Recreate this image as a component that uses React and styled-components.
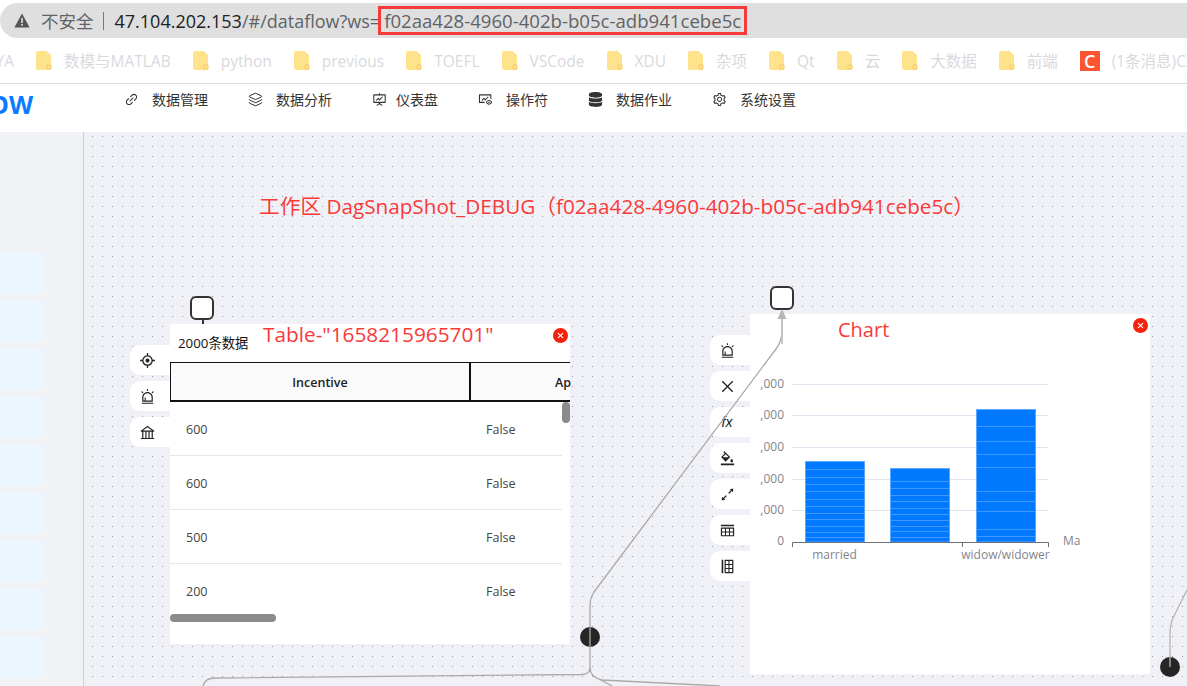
import React from 'react';
import styled, { createGlobalStyle } from 'styled-components';
import {
  AiOutlineLink, AiOutlineFundProjectionScreen, AiOutlineFundView, AiOutlineSetting,
  AiOutlineAim, AiOutlineAlert, AiOutlineBank, AiOutlineClose, AiOutlineBgColors,
  AiOutlineArrowsAlt, AiOutlineInsertRowAbove, AiOutlineInsertRowLeft, AiFillCloseCircle,
} from 'react-icons/ai';
import { FaDatabase } from 'react-icons/fa';
import { Layers } from 'lucide-react';

const FONT = `"Open Sans", "Noto Sans CJK SC", sans-serif`;
const RED = '#f93a3a';

const Global = createGlobalStyle`
  html, body { margin: 0; padding: 0; overflow: hidden; background: #fff; }
  * { box-sizing: border-box; }
`;

const Page = styled.div`
  width: 1187px;
  height: 686px;
  display: flex;
  flex-direction: column;
  overflow: hidden;
  font-family: ${FONT};
`;

/* browser chrome */
const AddressBar = styled.div`
  flex: none;
  height: 35px;
  margin-top: 3px;
  padding-left: 14px;
  display: flex;
  align-items: center;
  background: #dfdfdf;
  border-radius: 18px 0 0 18px;
  font-size: 18px;
  white-space: nowrap;
`;

const Warn = styled.svg`
  width: 16px;
  height: 15px;
  margin-right: 11px;
`;

const Insecure = styled.span`
  color: #5f6368;
  font-size: 17.5px;
`;

const Pipe = styled.span`
  width: 1px;
  height: 18px;
  margin: 0 11px 0 9px;
  background: #777;
`;

const Host = styled.span`
  color: #202124;
`;

const Rest = styled.span`
  color: #5f6368;
`;

const Highlight = styled.span`
  height: 29px;
  margin-left: -2px;
  padding: 0 3px;
  display: flex;
  align-items: center;
  border: 3px solid ${RED};
  color: #5f6368;
  font-size: 18.6px;
`;

const Bookmarks = styled.div`
  flex: none;
  height: 46px;
  margin-left: -20px;
  display: flex;
  align-items: center;
  gap: 22px;
  border-bottom: 1px solid #dcdcdc;
  white-space: nowrap;
`;

const Bookmark = styled.div`
  flex: none;
  display: flex;
  align-items: center;
  gap: 12px;
  color: #d9d9dd;
  font-size: 15.5px;
`;

const Faded = styled.span`
  flex: none;
  width: 34px;
  text-align: right;
  color: #d9d9dd;
  font-size: 15.5px;
`;

const CsdnMark = styled.span`
  width: 20px;
  height: 20px;
  display: flex;
  align-items: center;
  justify-content: center;
  background: #fc5531;
  color: #fff;
  font-size: 18px;
  font-weight: 600;
`;

/* app header */
const NavBar = styled.div`
  flex: none;
  height: 48px;
  padding-top: 5px;
  display: flex;
  align-items: flex-start;
  background: #fff;
`;

const Logo = styled.div`
  width: 135px;
  margin-left: -11px;
  margin-top: 2px;
  color: #0a7bff;
  font-size: 25px;
  font-weight: 700;
  line-height: 26px;
`;

const NavList = styled.div`
  display: flex;
  gap: 40px;
`;

const NavItem = styled.div`
  display: flex;
  align-items: center;
  gap: ${p => (p.$tight ? 9 : 13)}px;
  height: 20px;
  color: #333;
  font-size: 14px;
  svg { flex: none; width: 15px; height: 15px; color: #333; }
`;

/* workspace */
const Workspace = styled.div`
  flex: 1;
  display: flex;
  min-height: 0;
`;

const Sidebar = styled.div`
  flex: none;
  width: 84px;
  padding-top: 120px;
  display: flex;
  flex-direction: column;
  gap: 6px;
  background: #f0f2f5;
  border-right: 1px solid #cfcfd3;
`;

const SideItem = styled.div`
  flex: none;
  width: 44px;
  height: 42px;
  background: #ecf6ff;
  border-radius: 0 6px 6px 0;
`;

const Canvas = styled.div`
  position: relative;
  flex: 1;
  overflow: hidden;
  background-color: #f0f1f6;
  background-image: radial-gradient(circle at 8.5px 4.5px, #9d9da2 0.6px, transparent 1px);
  background-size: 10px 10px;
`;

const Title = styled.div`
  position: absolute;
  left: 175px;
  top: 58px;
  color: ${RED};
  font-size: 20.7px;
  white-space: nowrap;
`;

const Node = styled.div`
  position: absolute;
  left: ${p => p.$x}px;
  top: ${p => p.$y}px;
  display: flex;
  align-items: flex-start;
`;

const Tools = styled.div`
  width: 40px;
  margin-top: 21px;
  display: flex;
  flex-direction: column;
  gap: 6px;
`;

const Tool = styled.div`
  height: 30px;
  padding-right: 6px;
  display: flex;
  align-items: center;
  justify-content: center;
  background: #fff;
  border-radius: 10px 0 0 10px;
  color: #222;
  font-size: 14px;
  svg { width: 17px; height: 17px; }
`;

const Fx = styled.i`
  font-family: "Liberation Sans", sans-serif;
  font-size: 14px;
`;

const Card = styled.div`
  position: relative;
  width: 400px;
  height: ${p => p.$h}px;
  background: #fff;
`;

const Handle = styled.div`
  position: absolute;
  top: -28px;
  left: ${p => p.$x}px;
  width: 24px;
  height: 24px;
  background: #fff;
  border: 2px solid #333;
  border-radius: 6px;
`;

const Stem = styled.div`
  position: absolute;
  top: -4px;
  left: 32px;
  width: 2px;
  height: 4px;
  background: #333;
`;

const Close = styled(AiFillCloseCircle)`
  position: absolute;
  top: ${p => p.$y}px;
  right: 1px;
  width: 17px;
  height: 17px;
  color: #f5210f;
`;

const CardLabel = styled.div`
  position: absolute;
  top: ${p => p.$y}px;
  left: ${p => p.$x}px;
  color: ${RED};
  font-size: ${p => p.$size}px;
  white-space: nowrap;
`;

const Count = styled.div`
  height: 38px;
  padding: 9px 0 0 8px;
  color: #111;
  font-size: 13.3px;
`;

const TableHead = styled.div`
  height: 40px;
  display: grid;
  grid-template-columns: 300px 100px;
  background: #fafafa;
  border-top: 1px solid #111;
  border-bottom: 2px solid #111;
  border-left: 1px solid #111;
  color: #222;
  font-size: 12.5px;
  font-weight: 600;
`;

const HeadCell = styled.div`
  display: flex;
  align-items: center;
  justify-content: ${p => (p.$clip ? 'flex-start' : 'center')};
  padding-left: ${p => (p.$clip ? 84 : 0)}px;
  padding-top: 1px;
  border-right: ${p => (p.$clip ? 0 : 2)}px solid #111;
  overflow: hidden;
`;

const TableBody = styled.div`
  height: 242px;
  overflow: hidden;
`;

const Row = styled.div`
  width: 392px;
  height: 54px;
  padding-top: 1px;
  display: grid;
  grid-template-columns: 300px 92px;
  align-items: center;
  border-bottom: 1px solid #e8e8e8;
  color: #444;
  font-size: 12.5px;
  &:last-child { border-bottom: 0; }
`;

const Cell = styled.div`
  padding-left: 16px;
`;

const ScrollThumb = styled.div`
  position: absolute;
  background: #8b8b8b;
  border-radius: 4px;
`;

const VThumb = styled(ScrollThumb)`
  top: 78px;
  right: 0;
  width: 8px;
  height: 21px;
`;

const HThumb = styled(ScrollThumb)`
  top: 290px;
  left: 0;
  width: 106px;
  height: 8px;
`;

const ChartSvg = styled.svg`
  display: block;
  font-family: "Open Sans", sans-serif;
  font-size: 12px;
`;

const Wires = styled.svg`
  position: absolute;
  left: 0;
  top: 0;
  pointer-events: none;
`;

const Port = styled.div`
  position: absolute;
  left: ${p => p.$x}px;
  top: ${p => p.$y}px;
  width: 20px;
  height: 20px;
  border-radius: 50%;
  background: #262626;
`;

const Folder = () => (
  <svg width="16" height="19" viewBox="0 0 16 19">
    <path d="M2 0h8.5L15 4v13a2 2 0 0 1-2 2H2a2 2 0 0 1-2-2V2a2 2 0 0 1 2-2z" fill="#ffe28c" />
    <path d="M11 14h4v4h-4z" fill="none" stroke="#f3cc62" strokeWidth="1" />
  </svg>
);

const bookmarks = ['数模与MATLAB', 'python', 'previous', 'TOEFL', 'VSCode', 'XDU', '杂项', 'Qt', '云', '大数据', '前端'];

const nav = [
  { icon: <AiOutlineLink />, label: '数据管理' },
  { icon: <Layers strokeWidth={1.6} />, label: '数据分析' },
  { icon: <AiOutlineFundProjectionScreen />, label: '仪表盘', tight: true },
  { icon: <AiOutlineFundView />, label: '操作符' },
  { icon: <FaDatabase />, label: '数据作业' },
  { icon: <AiOutlineSetting />, label: '系统设置' },
];

const chartLines = [70, 101, 133, 165, 196];
const bars = [
  { x: 55.5, top: 147.5, w: 59, stripes: [155, 163, 170, 177, 185, 192, 199, 205, 212, 218, 223] },
  { x: 140.5, top: 154.5, w: 59, stripes: [167, 174, 181, 187, 194, 200, 206, 212, 217, 223] },
  { x: 226.5, top: 95.5, w: 59, stripes: [112, 127, 140, 153, 177, 187, 197, 215, 222] },
];

const Chart = () => (
  <ChartSvg width="330" height="360" viewBox="0 0 330 360">
    {chartLines.map(y => (
      <line key={y} x1="42" x2="298" y1={y + 0.5} y2={y + 0.5} stroke="#e0e6f1" />
    ))}
    {chartLines.map(y => (
      <text key={y} x="34" y={y + 4} textAnchor="end" fill="#85858d">,000</text>
    ))}
    <text x="34" y="231" textAnchor="end" fill="#85858d">0</text>
    {bars.map(b => (
      <g key={b.x}>
        <rect x={b.x} y={b.top} width={b.w} height={228 - b.top} fill="#0079ff" stroke="#5aa8ff" />
        {b.stripes.map(y => (
          <line key={y} x1={b.x} x2={b.x + b.w} y1={y + 0.5} y2={y + 0.5} stroke="#3f97ff" />
        ))}
      </g>
    ))}
    <path d="M42.5 233V228.5H298.5V233M212.5 228.5V233" fill="none" stroke="#6e7079" />
    <text x="84.5" y="245" textAnchor="middle" fill="#85858d">married</text>
    <text x="255.5" y="245" textAnchor="middle" fill="#85858d">widow/widower</text>
    <text x="313" y="231" fill="#85858d">Ma</text>
  </ChartSvg>
);

const App = () => (
  <Page>
    <Global />
    <AddressBar>
      <Warn viewBox="0 0 16 15">
        <path d="M8 0.5 15.6 14.5H0.4z" fill="#555" />
        <path d="M7.2 5h1.6v5H7.2zM7.2 11h1.6v1.7H7.2z" fill="#dfdfdf" />
      </Warn>
      <Insecure>不安全</Insecure>
      <Pipe />
      <Host>47.104.202.153</Host>
      <Rest>/#/dataflow?ws=</Rest>
      <Highlight>f02aa428-4960-402b-b05c-adb941cebe5c</Highlight>
    </AddressBar>
    <Bookmarks>
      <Faded>YA</Faded>
      {bookmarks.map(b => (
        <Bookmark key={b}><Folder />{b}</Bookmark>
      ))}
      <Bookmark><CsdnMark>C</CsdnMark>(1条消息)CSDN</Bookmark>
    </Bookmarks>
    <NavBar>
      <Logo>OW</Logo>
      <NavList>
        {nav.map(n => (
          <NavItem key={n.label} $tight={n.tight}>{n.icon}{n.label}</NavItem>
        ))}
      </NavList>
    </NavBar>
    <Workspace>
      <Sidebar>
        {Array.from({ length: 9 }, (_, i) => <SideItem key={i} />)}
      </Sidebar>
      <Canvas>
        <Title>工作区 DagSnapShot_DEBUG（f02aa428-4960-402b-b05c-adb941cebe5c）</Title>

        <Node $x={46} $y={192}>
          <Tools>
            <Tool><AiOutlineAim /></Tool>
            <Tool><AiOutlineAlert /></Tool>
            <Tool><AiOutlineBank /></Tool>
          </Tools>
          <Card $h={320}>
            <Handle $x={20} />
            <Stem />
            <CardLabel $x={93} $y={-4} $size={20.8}>Table-"1658215965701"</CardLabel>
            <Close $y={3} />
            <Count>2000条数据</Count>
            <TableHead>
              <HeadCell>Incentive</HeadCell>
              <HeadCell $clip>Ap</HeadCell>
            </TableHead>
            <TableBody>
              {['600', '600', '500', '200'].map((v, i) => (
                <Row key={i}><Cell>{v}</Cell><Cell>False</Cell></Row>
              ))}
            </TableBody>
            <VThumb />
            <HThumb />
          </Card>
        </Node>

        <Node $x={626} $y={182}>
          <Tools>
            <Tool><AiOutlineAlert /></Tool>
            <Tool><AiOutlineClose /></Tool>
            <Tool><Fx>fx</Fx></Tool>
            <Tool><AiOutlineBgColors /></Tool>
            <Tool><AiOutlineArrowsAlt /></Tool>
            <Tool><AiOutlineInsertRowAbove /></Tool>
            <Tool><AiOutlineInsertRowLeft /></Tool>
          </Tools>
          <Card $h={360}>
            <Handle $x={20} />
            <CardLabel $x={88} $y={2} $size={20}>Chart</CardLabel>
            <Close $y={3} />
            <Chart />
          </Card>
        </Node>

        <Port $x={496} $y={495} />
        <Port $x={1076} $y={525} />

        <Wires width="1103" height="554" viewBox="84 132 1103 554" fill="none">
          <path d="M590 637V606Q590 598 594 592L776 349Q782 341 782 330V318" stroke="#aaa" strokeWidth="1.3" />
          <path d="M782 344V318" stroke="#c4c4c4" strokeWidth="2" />
          <path d="M782 309 786.5 319H777.5z" fill="#b5b5b5" />
          <path d="M590 637V668Q590 674 582 674.5L215 678Q205 678 203 686" stroke="#aaa" strokeWidth="1.3" />
          <path d="M590 668Q590 677 602 680L720 686" stroke="#aaa" strokeWidth="1.3" />
          <path d="M600 679.5 612 686" stroke="#aaa" strokeWidth="1.3" />
          <path d="M1170 667V634Q1170 624 1174 616L1187 590" stroke="#b5b5b5" strokeWidth="1.3" />
        </Wires>
      </Canvas>
    </Workspace>
  </Page>
);

export default App;
